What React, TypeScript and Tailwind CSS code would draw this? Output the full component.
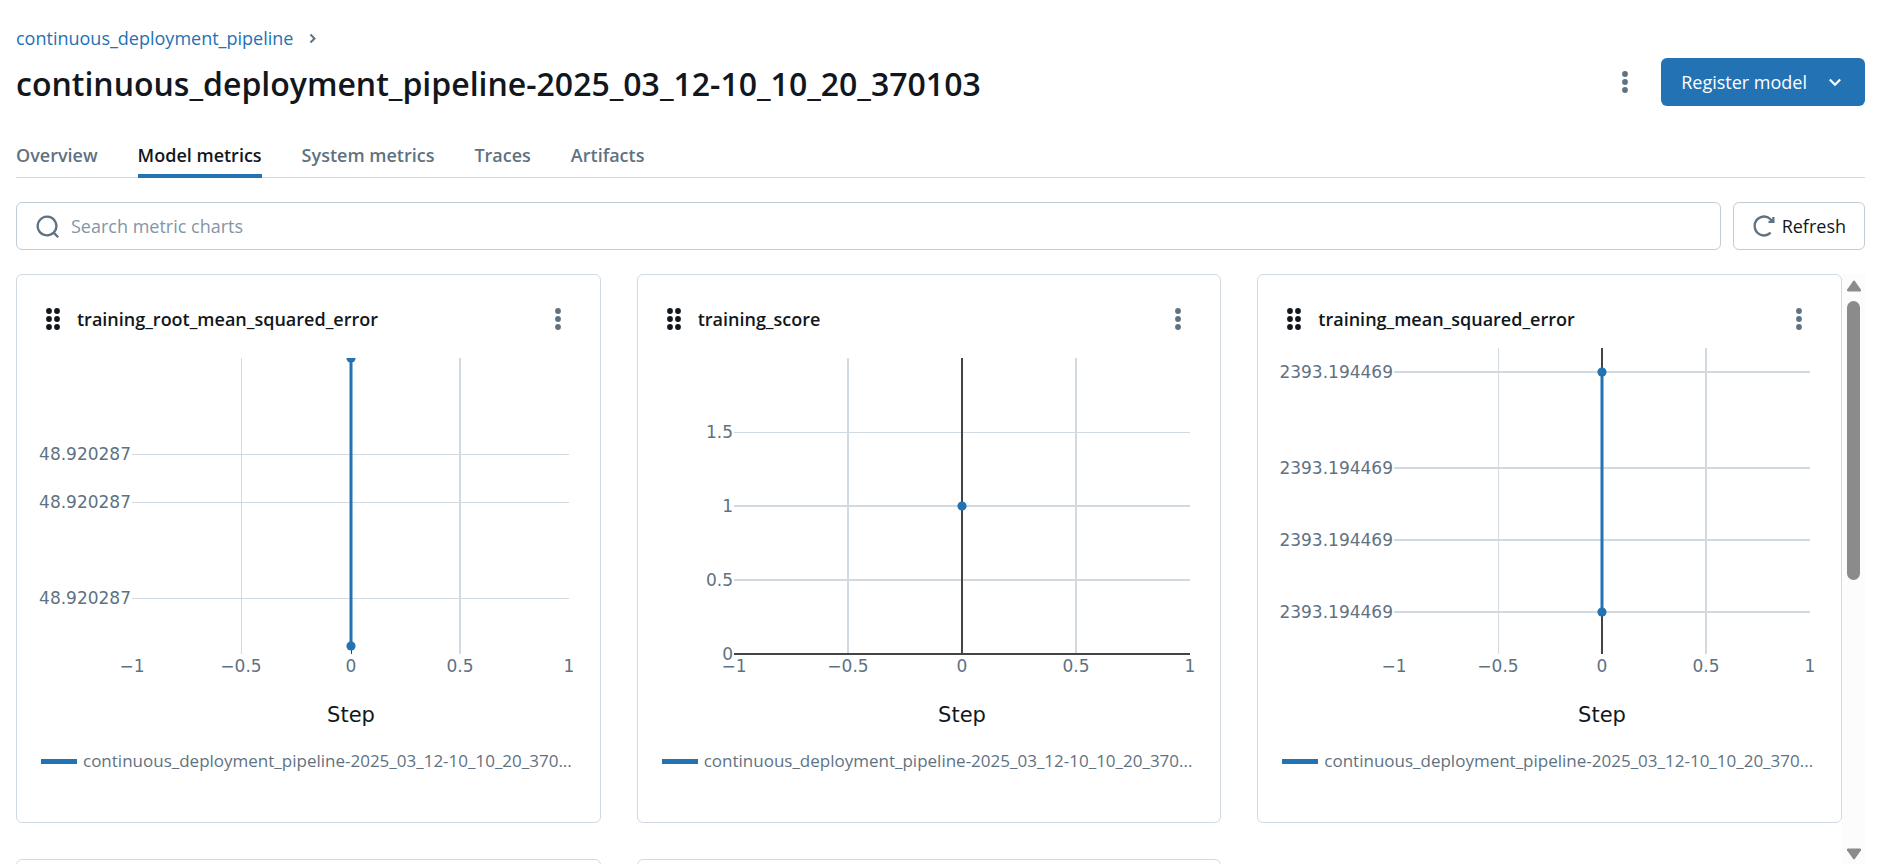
import { useLayoutEffect, useRef, useState } from "react";

type Tick = { value: string; y: number; thick?: boolean };
type Metric = {
  title: string;
  left: number;
  top: number;
  yTicks: Tick[];
  points: number[];
  zeroLine: boolean;
};

const RUN = "continuous_deployment_pipeline-2025_03_12-10_10_20_370103";
const RUN_SHORT = "continuous_deployment_pipeline-2025_03_12-10_10_20_370...";
const BOTTOM = 313;
const X_TICKS = ["−1", "−0.5", "0", "0.5", "1"];

const METRICS: Metric[] = [
  {
    title: "training_root_mean_squared_error",
    left: 115,
    top: 17,
    yTicks: [
      { value: "48.920287", y: 113 },
      { value: "48.920287", y: 161 },
      { value: "48.920287", y: 257 },
    ],
    points: [17, 305],
    zeroLine: false,
  },
  {
    title: "training_score",
    left: 96,
    top: 17,
    yTicks: [
      { value: "1.5", y: 91 },
      { value: "1", y: 165, thick: true },
      { value: "0.5", y: 239, thick: true },
      { value: "0", y: 313 },
    ],
    points: [165],
    zeroLine: true,
  },
  {
    title: "training_mean_squared_error",
    left: 136,
    top: 7,
    yTicks: [
      { value: "2393.194469", y: 31, thick: true },
      { value: "2393.194469", y: 127, thick: true },
      { value: "2393.194469", y: 199, thick: true },
      { value: "2393.194469", y: 271, thick: true },
    ],
    points: [31, 271],
    zeroLine: true,
  },
];

function Kebab() {
  return (
    <svg width="24" height="24" viewBox="0 0 24 24" fill="#5f7281" aria-hidden="true">
      <circle cx="12" cy="4" r="2.9" />
      <circle cx="12" cy="12" r="2.9" />
      <circle cx="12" cy="20" r="2.9" />
    </svg>
  );
}

function DragHandle() {
  return (
    <svg width="16" height="24" viewBox="0 0 16 24" fill="#11171c" aria-hidden="true">
      {[4, 12, 20].map((y) => (
        <g key={y}>
          <circle cx="4" cy={y} r="2.9" />
          <circle cx="12" cy={y} r="2.9" />
        </g>
      ))}
    </svg>
  );
}

function Chart({ metric }: { metric: Metric }) {
  const box = useRef<HTMLDivElement>(null);
  const [width, setWidth] = useState(583);

  useLayoutEffect(() => {
    const node = box.current;
    if (!node) return;
    const measure = () => setWidth(Math.round(node.clientWidth));
    measure();
    const observer = new ResizeObserver(measure);
    observer.observe(node);
    return () => observer.disconnect();
  }, []);

  const { left, top, yTicks, points, zeroLine, title } = metric;
  const right = width - 31;
  const xs = [0, 1, 2, 3, 4].map((i) => Math.round(left + ((right - left) * i) / 4));
  const zero = xs[2];
  const clip = `clip-${title}`;

  return (
    <div ref={box} className="w-full overflow-hidden">
      <svg width={width} height="396" className="block font-['DejaVu_Sans',sans-serif]" role="img" aria-label={title}>
        <clipPath id={clip}>
          <rect x={left} y={top} width={Math.max(0, right - left)} height={BOTTOM - top} />
        </clipPath>
        <g stroke="#d1d9e1" shapeRendering="crispEdges">
          <line x1={xs[1]} x2={xs[1]} y1={top} y2={BOTTOM} strokeWidth={title === "training_score" ? 2 : 1} />
          <line x1={xs[3]} x2={xs[3]} y1={top} y2={BOTTOM} strokeWidth="2" />
          {yTicks.map((t, i) => (
            <line key={i} x1={left} x2={right} y1={t.y} y2={t.y} strokeWidth={t.thick ? 2 : 1} />
          ))}
        </g>
        <g stroke="#444444" strokeWidth="2" shapeRendering="crispEdges">
          {zeroLine && <line x1={zero} x2={zero} y1={top} y2={BOTTOM} />}
          {!zeroLine && <line x1={zero} x2={zero} y1={top} y2={BOTTOM} strokeWidth="1" />}
          {title === "training_score" && <line x1={left} x2={right} y1={BOTTOM} y2={BOTTOM} />}
        </g>
        <g clipPath={`url(#${clip})`} fill="#2272b4">
          {points.length > 1 && (
            <line x1={zero} x2={zero} y1={points[0]} y2={points[1]} stroke="#2272b4" strokeWidth="3" />
          )}
          {points.map((y) => (
            <circle key={y} cx={zero} cy={y} r="4.6" />
          ))}
        </g>
        <g fill="#5f7281" fontSize="17">
          {yTicks.map((t, i) => (
            <text key={i} x={left - 1} y={t.y + 6} textAnchor="end">
              {t.value}
            </text>
          ))}
          {X_TICKS.map((label, i) => (
            <text key={label} x={xs[i]} y="331" textAnchor="middle">
              {label}
            </text>
          ))}
        </g>
        <text x={zero} y="381" textAnchor="middle" fontSize="21" fill="#11171c">
          Step
        </text>
      </svg>
    </div>
  );
}

function MetricCard({ metric }: { metric: Metric }) {
  return (
    <section className="flex h-[549px] min-w-0 flex-col rounded-md border border-[#d1d9e1] bg-white">
      <header className="flex h-[66px] shrink-0 items-end pr-[30px] pb-2.5 pl-7">
        <button type="button" aria-label="Move chart">
          <DragHandle />
        </button>
        <h2 className="ml-4 min-w-0 flex-1 truncate text-[18px] leading-6 font-semibold">{metric.title}</h2>
        <button type="button" aria-label="Chart options">
          <Kebab />
        </button>
      </header>
      <Chart metric={metric} />
      <div className="flex items-center gap-1.5 overflow-hidden pt-3 pl-6">
        <span className="h-[5px] w-9 shrink-0 bg-[#2272b4]" />
        <span className="text-[17px] leading-6 whitespace-nowrap text-[#5f7281]">{RUN_SHORT}</span>
      </div>
    </section>
  );
}

const TABS = ["Overview", "Model metrics", "System metrics", "Traces", "Artifacts"];

export default function App() {
  return (
    <div className="flex h-screen flex-col overflow-hidden bg-white px-4 pt-6 pb-1 font-['Open_Sans','Noto_Sans',sans-serif] text-[18px] text-[#11171c]">
      <nav aria-label="Breadcrumb" className="flex h-7 shrink-0 items-center gap-4 text-[#2272b4]">
        <a href="#experiment">continuous_deployment_pipeline</a>
        <svg width="8" height="12" viewBox="0 0 8 12" fill="none" stroke="#5f7281" strokeWidth="2" aria-hidden="true">
          <path d="M1.5 2.5 5.5 6.5 1.5 10.5" />
        </svg>
      </nav>
      <div className="mt-1.5 flex h-12 shrink-0 items-center">
        <h1 className="min-w-0 flex-1 truncate pt-1 text-[32px] leading-12 font-semibold">{RUN}</h1>
        <button type="button" aria-label="Run options" className="mr-6">
          <Kebab />
        </button>
        <button type="button" className="flex h-12 items-center gap-[18px] rounded-md bg-[#2272b4] px-5 text-white">
          Register model
          <svg width="20" height="20" viewBox="0 0 20 20" fill="none" stroke="currentColor" strokeWidth="2.2" aria-hidden="true">
            <path d="M4.8 7.5 10 12.7 15.2 7.5" />
          </svg>
        </button>
      </div>
      <div role="tablist" className="mt-6 flex h-12 shrink-0 gap-10 border-b border-[#d1d9e1] font-semibold text-[#5f7281]">
        {TABS.map((tab) => (
          <button
            key={tab}
            type="button"
            role="tab"
            aria-selected={tab === "Model metrics"}
            className="-mb-px border-b-4 border-transparent pt-1.5 aria-selected:border-[#2272b4] aria-selected:text-[#11171c]"
          >
            {tab}
          </button>
        ))}
      </div>
      <div className="mt-6 flex h-12 shrink-0 gap-3">
        <label className="flex min-w-0 flex-1 items-center gap-3 rounded-md border border-[#c0cdd8] pl-[18px]">
          <svg width="24" height="24" viewBox="0 0 16 16" fill="#5f7281" fillRule="evenodd" aria-hidden="true">
            <path d="M8 1a7 7 0 1 0 4.39 12.453l2.55 2.55 1.06-1.06-2.55-2.55A7 7 0 0 0 8 1M2.5 8a5.5 5.5 0 1 1 11 0 5.5 5.5 0 0 1-11 0Z" />
          </svg>
          <input
            type="text"
            aria-label="Search metric charts"
            placeholder="Search metric charts"
            className="min-w-0 flex-1 bg-transparent outline-none placeholder:text-[#8396a5]"
          />
        </label>
        <button type="button" className="flex items-center gap-1.5 rounded-md border border-[#c0cdd8] px-[18px]">
          <svg width="24" height="24" viewBox="0 0 16 16" fill="#5f7281" fillRule="evenodd" aria-hidden="true">
            <path d="M1 8a7 7 0 0 1 11.85-5.047l.65.594V2H15v4h-4V4.5h1.32l-.496-.453-.007-.007a5.5 5.5 0 1 0 .083 7.839l1.063 1.058A7 7 0 0 1 1 8Z" />
          </svg>
          Refresh
        </button>
      </div>
      <main className="mt-6 flex min-h-0 flex-1">
        <div className="grid min-w-0 flex-1 auto-rows-max grid-cols-3 gap-9 overflow-hidden">
          {METRICS.map((metric) => (
            <MetricCard key={metric.title} metric={metric} />
          ))}
          <section className="h-[549px] rounded-md border border-[#d1d9e1]" />
          <section className="h-[549px] rounded-md border border-[#d1d9e1]" />
        </div>
        <div className="flex w-[23px] shrink-0 flex-col items-center bg-[#fcfcfc] pt-1.5 pb-1" aria-hidden="true">
          <svg width="16" height="12" viewBox="0 0 16 12" fill="#8b8b8b">
            <path d="M7 1.2Q8 0 9 1.2L15 9.8Q15.5 11.5 14 11.5H2Q.5 11.5 1 9.8Z" />
          </svg>
          <div className="mt-[9px] h-[279px] w-[13px] rounded-full bg-[#8b8b8b]" />
          <svg width="16" height="12" viewBox="0 0 16 12" fill="#8b8b8b" className="mt-auto">
            <path d="M7 10.8Q8 12 9 10.8L15 2.2Q15.5.5 14 .5H2Q.5.5 1 2.2Z" />
          </svg>
        </div>
      </main>
    </div>
  );
}
